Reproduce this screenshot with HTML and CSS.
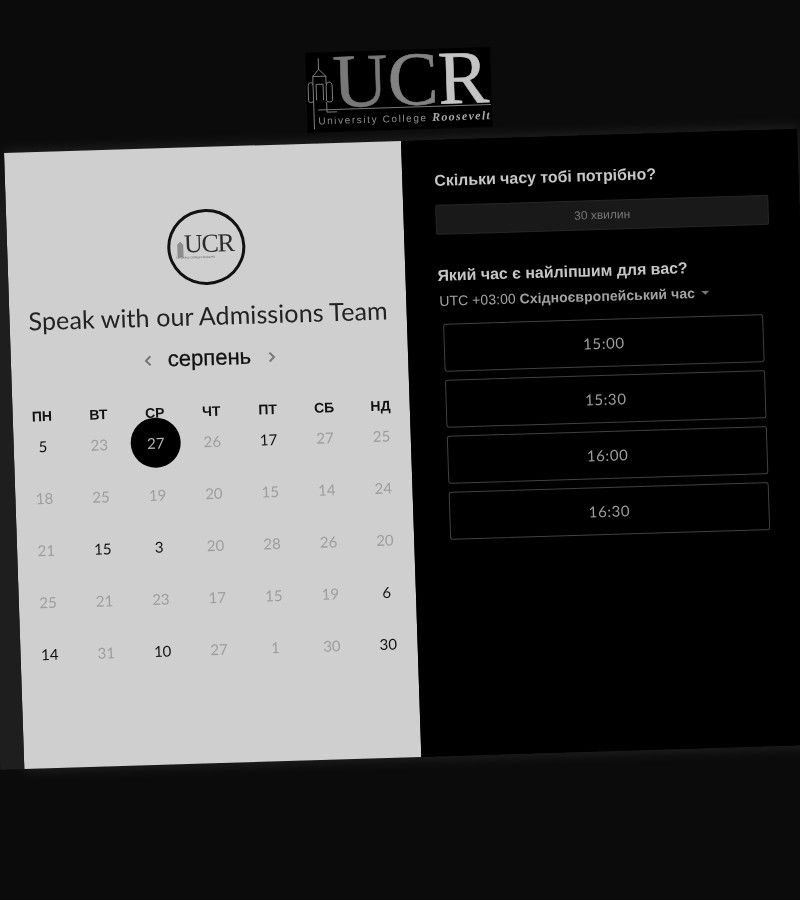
FILE: index.html
```html
<!DOCTYPE html>
<html lang="en">
  <head>
    <meta charset="UTF-8" />
    <meta name="viewport" content="width=device-width, initial-scale=1" />
    <title>Speak with our Admissions Team</title>
    <link rel="stylesheet" href="styles.css">
  </head>
  <body>
    <div class="scene">
      <div class="brand">
        <svg class="brand-tower" viewBox="0 0 30 76" fill="none">
          <path d="M13 2V13M13 13L7 20V28M13 13L20 20V28M7 20H20" />
          <path d="M2 44V30Q2 26 4.500 26T7 30V44M10 44V28H17V44M20 44V30Q20 26 23 26T26 30V44Q26 46 23 46T20 44" />
          <path d="M2 44Q2 46 4.500 46T7 44M7 44V73M20 46V56H30" />
        </svg>
        <div class="brand-text">
          <div class="brand-name"><span class="u">U</span><span class="c">C</span><span class="r">R</span></div>
          <div class="brand-sub">University College <em>Roosevelt</em></div>
        </div>
      </div>

      <div class="card">
        <div class="left">
          <div class="avatar">
            <svg class="avatar-tower" viewBox="0 0 8 22">
              <path d="M4 0V6L1 9V22H7V9L4 6Z" />
            </svg>
            <div class="avatar-text">
              <div class="avatar-name">UCR</div>
              <div class="avatar-sub">University College Roosevelt</div>
            </div>
          </div>
          <h1 class="title">Speak with our Admissions Team</h1>
          <div class="month">
            <svg class="arrow" viewBox="0 0 8 12"><path d="M6.500 1.500L2 6L6.500 10.500" /></svg>
            <span class="month-name">серпень</span>
            <svg class="arrow" viewBox="0 0 8 12"><path d="M1.500 1.500L6 6L1.500 10.500" /></svg>
          </div>
          <div class="weekdays">
            <div>ПН</div><div>ВТ</div><div>СР</div><div>ЧТ</div><div>ПТ</div><div>СБ</div><div>НД</div>
          </div>
          <div class="days">
            <div class="day on">5</div><div class="day">23</div><div class="day selected"><span>27</span></div><div class="day">26</div><div class="day on">17</div><div class="day">27</div><div class="day">25</div>
            <div class="day">18</div><div class="day">25</div><div class="day">19</div><div class="day">20</div><div class="day">15</div><div class="day">14</div><div class="day">24</div>
            <div class="day">21</div><div class="day on">15</div><div class="day on">3</div><div class="day">20</div><div class="day">28</div><div class="day">26</div><div class="day">20</div>
            <div class="day">25</div><div class="day">21</div><div class="day">23</div><div class="day">17</div><div class="day">15</div><div class="day">19</div><div class="day on">6</div>
            <div class="day on">14</div><div class="day">31</div><div class="day on">10</div><div class="day">27</div><div class="day">1</div><div class="day">30</div><div class="day on">30</div>
          </div>
        </div>

        <div class="right">
          <h2 class="question">Скільки часу тобі потрібно?</h2>
          <div class="duration">30 хвилин</div>
          <h2 class="question second">Який час є найліпшим для вас?</h2>
          <div class="zone">UTC +03:00 <b>Східноєвропейський час</b><span class="caret"></span></div>
          <div class="slots">
            <div class="slot">15:00</div>
            <div class="slot">15:30</div>
            <div class="slot">16:00</div>
            <div class="slot">16:30</div>
          </div>
        </div>
      </div>
    </div>
  </body>
</html>
```

FILE: styles.css
```css
* {
  box-sizing: border-box;
}
html,
body {
  height: 100%;
}
body {
  margin: 0;
  overflow: hidden;
  background: #0b0b0b;
  font-family: "Liberation Sans", Arial, sans-serif;
}
.scene {
  display: flex;
  flex-direction: column;
  width: 793px;
  margin: 62px 0 0 1px;
  transform: matrix(1, -0.0305, 0.033, 1, 0, 0);
  transform-origin: 0 0;
  filter: grayscale(1);
}
.brand {
  display: flex;
  align-self: center;
  width: 185px;
  height: 80px;
  margin-bottom: 11px;
  background: #000;
}
.brand-tower {
  flex: none;
  width: 30px;
  height: 76px;
  margin-top: 4px;
  stroke: #8a8a8a;
  stroke-width: 0.9;
}
.brand-text {
  margin-left: -3px;
  padding-top: 1px;
}
.brand-name {
  font-family: "Liberation Serif", serif;
  font-size: 76px;
  line-height: 56px;
  letter-spacing: -0.3px;
}
.brand-name span {
  -webkit-text-stroke: 0.6px currentColor;
}
.brand-name .u {
  color: #787878;
}
.brand-name .c {
  color: #828282;
}
.brand-name .r {
  color: #c4c4c4;
}
.brand-sub {
  margin-left: -16px;
  padding-top: 4px;
  border-top: 1px solid #777;
  font-size: 10px;
  line-height: 13px;
  letter-spacing: 1.6px;
  white-space: nowrap;
  color: #8c8c8c;
}
.brand-sub em {
  font-family: "Liberation Serif", serif;
  font-size: 12px;
  font-weight: bold;
  letter-spacing: 1.3px;
  color: #a8a8a8;
}
.card {
  position: relative;
  display: flex;
  height: 616px;
  box-shadow: 0 0 14px rgba(255, 255, 255, 0.12);
}
/* lighter strip that shows to the left of the card */
.card::before {
  content: "";
  position: absolute;
  top: 0;
  bottom: 0;
  left: -24px;
  width: 24px;
  background: linear-gradient(#0f0f0f, #1e1e1e 12%);
}
.left {
  width: 397px;
  padding: 62px 1px 0;
  background: #cfcfcf;
}
.avatar {
  display: flex;
  align-items: center;
  justify-content: center;
  width: 78px;
  height: 76px;
  margin: 0 auto;
  padding-right: 2px;
  border: 3px solid #111;
  border-radius: 50%;
}
.avatar-tower {
  flex: none;
  width: 8px;
  height: 22px;
  margin: 0 0 3px;
  fill: #8d8d8d;
}
.avatar-name {
  font-family: "Liberation Serif", serif;
  font-size: 26px;
  line-height: 20px;
  letter-spacing: -1.3px;
  color: #2c2c2c;
}
.avatar-sub {
  width: 54px;
  margin-left: -8px;
  padding-top: 1px;
  font-size: 3px;
  line-height: 5px;
  white-space: nowrap;
  color: #666;
}
.title {
  margin: 14px 0 0;
  font-family: Lato, sans-serif;
  font-size: 25px;
  font-weight: 400;
  line-height: 32px;
  letter-spacing: 0.1px;
  text-align: center;
  white-space: nowrap;
  color: #222;
}
.month {
  display: flex;
  align-items: center;
  justify-content: center;
  gap: 15px;
  height: 28px;
  margin-top: 13px;
}
.month-name {
  width: 86px;
  font-size: 22px;
  text-align: center;
  color: #111;
  -webkit-text-stroke: 0.3px #111;
}
.arrow {
  width: 8px;
  height: 12px;
  margin-top: 2px;
  fill: none;
  stroke: #777;
  stroke-width: 2;
}
.weekdays,
.days {
  display: grid;
  grid-template-columns: repeat(7, 1fr);
  justify-items: center;
}
.weekdays {
  height: 20px;
  margin-top: 29px;
  font-size: 14px;
  font-weight: bold;
  line-height: 20px;
  color: #111;
}
.days {
  grid-auto-rows: 52px;
  margin-top: -6.500px;
  align-items: center;
}
.day {
  font-family: Lato, sans-serif;
  font-size: 15px;
  color: #9d9d9d;
}
.day.on {
  color: #111;
}
.day.selected {
  display: flex;
  align-items: center;
  justify-content: center;
  width: 50px;
  height: 50px;
  border-radius: 50%;
  background: #000;
  color: #b5b5b5;
}
.right {
  width: 396px;
  padding: 31px 31px 0 32px;
  background: #000;
}
.question {
  margin: 0;
  font-size: 15.900px;
  font-weight: bold;
  line-height: 20px;
  color: #c6c6c6;
}
.question.second {
  margin-top: 31px;
}
.duration {
  height: 30px;
  margin-top: 14px;
  border: 1px solid #262626;
  border-radius: 2px;
  background: #191919;
  font-size: 12px;
  line-height: 28px;
  text-align: center;
  color: #777;
}
.zone {
  display: flex;
  align-items: center;
  height: 20px;
  margin: 5px 0 0 1px;
  font-size: 14px;
  letter-spacing: 0.05px;
  white-space: pre;
  color: #a2a2a2;
}
.caret {
  width: 0;
  height: 0;
  margin-left: 6px;
  border-top: 4px solid #777;
  border-left: 4px solid transparent;
  border-right: 4px solid transparent;
}
.slots {
  display: flex;
  flex-direction: column;
  gap: 8px;
  width: 320px;
  margin: 13px 0 0 4px;
}
.slot {
  height: 48px;
  border: 1px solid #414141;
  border-radius: 3px;
  font-family: Lato, sans-serif;
  font-size: 15px;
  line-height: 46px;
  letter-spacing: 0.6px;
  text-align: center;
  color: #9e9e9e;
}
```
